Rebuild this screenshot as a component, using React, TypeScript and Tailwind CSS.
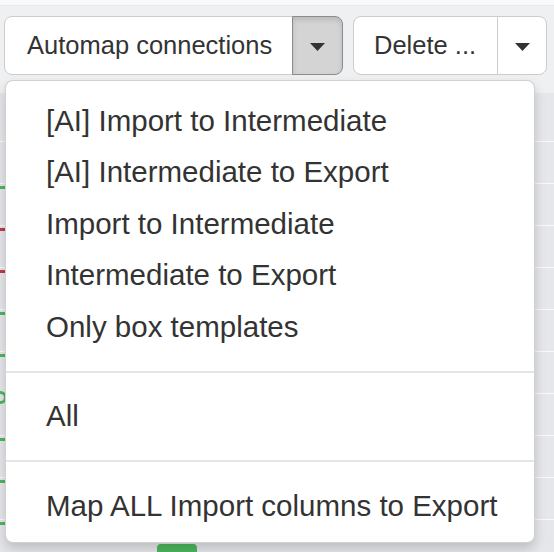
import React from "react";

const Caret = () => (
  <svg width="15" height="8" viewBox="0 0 15 8" className="block">
    <path d="M0 0 L15 0 L7.5 8 Z" fill="#333333" />
  </svg>
);

const marks: { y: number; c: string }[] = [
  { y: 186, c: "#4cb75c" },
  { y: 228, c: "#c1394c" },
  { y: 270, c: "#c1394c" },
  { y: 312, c: "#4cb75c" },
  { y: 354, c: "#4cb75c" },
  { y: 438, c: "#4cb75c" },
  { y: 480, c: "#4cb75c" },
  { y: 522, c: "#4cb75c" },
];

const group1 = [
  "[AI] Import to Intermediate",
  "[AI] Intermediate to Export",
  "Import to Intermediate",
  "Intermediate to Export",
  "Only box templates",
];

export default function App() {
  return (
    <div
      className="relative w-[554px] h-[552px] overflow-hidden bg-[#e5e7ea] flex flex-col"
      style={{ fontFamily: '"Liberation Sans", Arial, sans-serif' }}
    >
      <div className="h-[6px] shrink-0 bg-[#f8f9fa] border-b border-[#e9eaec]" />
      <div className="h-[87px] bg-[#eff0f2] pt-[10px] pl-[4px] flex items-start gap-[10px] shrink-0">
        <div className="flex h-[59px]">
          <div className="w-[289px] h-full bg-white border border-[#cccccc] rounded-l-[8px] flex items-center pl-[22px] text-[25.5px] text-[#333333]">
            Automap connections
          </div>
          <div className="w-[51px] -ml-px h-full bg-[#d4d4d4] border border-[#8c8c8c] rounded-r-[8px] shadow-[inset_0_3px_5px_rgba(0,0,0,0.125)] flex items-center justify-center pt-[3px]">
            <Caret />
          </div>
        </div>
        <div className="flex h-[59px]">
          <div className="w-[145px] h-full bg-white border border-[#cccccc] rounded-l-[8px] flex items-center pl-[20px] text-[25.5px] text-[#333333]">
            Delete ...
          </div>
          <div className="w-[50px] -ml-px h-full bg-white border border-[#cccccc] rounded-r-[8px] flex items-center justify-center pt-[3px]">
            <Caret />
          </div>
        </div>
      </div>
      <div className="flex-1 min-h-0 pt-[7px]">
        {Array.from({ length: 11 }).map((_, i) => (
          <div key={i} className="h-[42px] border-b border-white/80" />
        ))}
      </div>

      {marks.map((m, i) => (
        <div
          key={i}
          className="absolute left-0 w-[6px] h-[3px]"
          style={{ top: m.y, backgroundColor: m.c }}
        />
      ))}
      <div className="absolute left-[-6px] top-[391px] w-[13px] h-[13px] rounded-full border-[3px] border-[#4cb75c]" />
      <div className="absolute left-[157px] top-[544px] w-[40px] h-[12px] rounded-t-[4px] bg-[#4cb75c]" />

      <div className="absolute left-[5px] top-[80px] w-[530px] h-[463px] bg-white border border-[rgba(0,0,0,0.18)] rounded-[8px] shadow-[0_6px_12px_rgba(0,0,0,0.175)] pt-[14px] text-[29.5px] text-[#333333]">
        {group1.map((t) => (
          <div key={t} className="h-[51.5px] flex items-center pl-[40px] whitespace-nowrap">
            {t}
          </div>
        ))}
        <div className="h-[2px] bg-[#e5e5e5] my-[18px]" />
        <div className="h-[51.5px] flex items-center pl-[40px]">All</div>
        <div className="h-[2px] bg-[#e5e5e5] my-[18px]" />
        <div className="h-[51.5px] flex items-center pl-[40px] whitespace-nowrap">
          Map ALL Import columns to Export
        </div>
      </div>
    </div>
  );
}
